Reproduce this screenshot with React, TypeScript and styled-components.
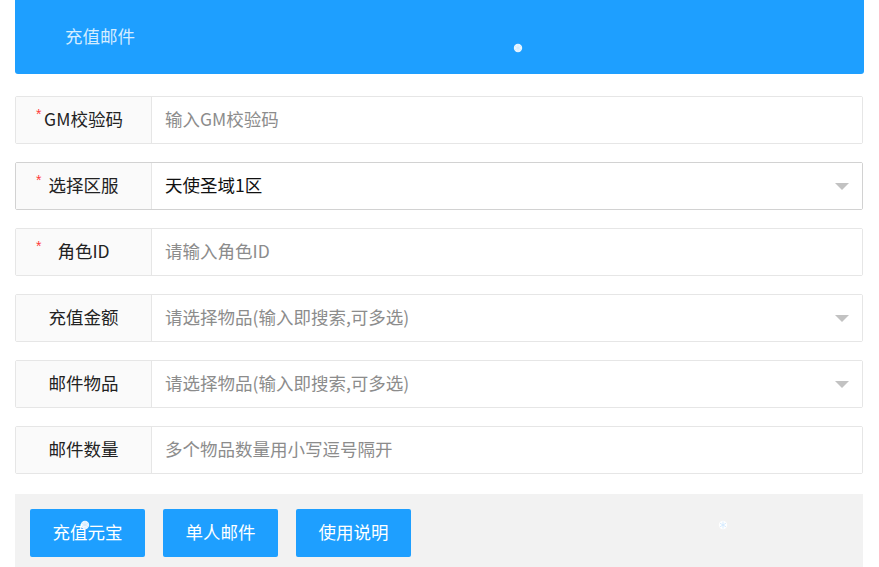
import React from "react";
import styled, { createGlobalStyle } from "styled-components";

const Global = createGlobalStyle`
  html, body { margin: 0; padding: 0; background: #fff; }
  body { font-family: "Noto Sans CJK SC", "Noto Sans", sans-serif; }
  * { box-sizing: border-box; }
`;

const Page = styled.div`
  position: relative;
  padding: 0 15px;
  height: 567px;
  overflow: hidden;
`;

const Header = styled.div`
  height: 74px;
  background: #1e9fff;
  border-radius: 0 0 3px 3px;
  display: flex;
  align-items: center;
  padding-left: 50px;
  padding-bottom: 4px;
  color: rgba(255, 255, 255, 0.82);
  font-size: 17.5px;
  margin-bottom: 22px;
`;

const Form = styled.div`
  display: flex;
  flex-direction: column;
  gap: 18px;
  margin-bottom: 20px;
`;

const Row = styled.div<{ $select?: boolean }>`
  position: relative;
  display: flex;
  height: 48px;
  border: 1px solid ${(p) => (p.$select ? "#d2d2d2" : "#e6e6e6")};
  border-radius: 2px;
  width: 848px;
`;

const Label = styled.div`
  position: relative;
  width: 136px;
  flex: none;
  background: #fafafa;
  border-right: 1px solid #e6e6e6;
  display: flex;
  align-items: center;
  justify-content: center;
  padding-bottom: 4px;
  font-size: 17.5px;
  color: #222;
`;

const Star = styled.span<{ $left: number }>`
  position: absolute;
  left: ${(p) => p.$left}px;
  top: 10px;
  color: #ff3b3b;
  font-size: 14px;
  line-height: 14px;
  font-family: "Liberation Sans", sans-serif;
`;

const Field = styled.div<{ $filled?: boolean }>`
  flex: 1;
  display: flex;
  align-items: center;
  padding-left: 13px;
  padding-bottom: 4px;
  font-size: 17.5px;
  color: ${(p) => (p.$filled ? "#111" : "#8c8c8c")};
  background: #fff;
`;

const Arrow = styled.span`
  position: absolute;
  right: 13px;
  top: 50%;
  margin-top: -3px;
  width: 0;
  height: 0;
  border-left: 7px solid transparent;
  border-right: 7px solid transparent;
  border-top: 7px solid #c2c2c2;
`;

const Bar = styled.div`
  background: #f2f2f2;
  padding: 15px;
  height: 90px;
  display: flex;
  gap: 18px;
  width: 848px;
`;

const Button = styled.button`
  width: 115px;
  height: 48px;
  background: #1e9fff;
  color: #fff;
  border: none;
  border-radius: 2px;
  font-family: inherit;
  font-size: 17.5px;
  padding: 0 0 4px;
`;

const FlakeWrap = styled.svg<{ $x: number; $y: number }>`
  position: absolute;
  left: ${(p) => p.$x}px;
  top: ${(p) => p.$y}px;
  width: 10px;
  height: 10px;
  pointer-events: none;
`;

function Flake({ x, y }: { x: number; y: number }) {
  return (
    <FlakeWrap $x={x} $y={y} viewBox="0 0 10 10">
      <circle cx="5" cy="5" r="4.2" fill="#fff" opacity="0.9" />
      <g stroke="#cfe9ff" strokeWidth="0.8">
        <line x1="5" y1="1.5" x2="5" y2="8.5" />
        <line x1="2" y1="3.2" x2="8" y2="6.8" />
        <line x1="2" y1="6.8" x2="8" y2="3.2" />
      </g>
    </FlakeWrap>
  );
}

type R = { label: string; star?: number; value: string; filled?: boolean; select?: boolean };

const rows: R[] = [
  { label: "GM校验码", star: 20, value: "输入GM校验码" },
  { label: "选择区服", star: 20, value: "天使圣域1区", filled: true, select: true },
  { label: "角色ID", star: 20, value: "请输入角色ID" },
  { label: "充值金额", value: "请选择物品(输入即搜索,可多选)", select: true },
  { label: "邮件物品", value: "请选择物品(输入即搜索,可多选)", select: true },
  { label: "邮件数量", value: "多个物品数量用小写逗号隔开" },
];

export default function App() {
  return (
    <Page>
      <Global />
      <Header>充值邮件</Header>
      <Form>
        {rows.map((r) => (
          <Row key={r.label} $select={r.filled}>
            <Label>
              {r.star !== undefined && <Star $left={r.star}>*</Star>}
              {r.label}
            </Label>
            <Field $filled={r.filled}>{r.value}</Field>
            {r.select && <Arrow />}
          </Row>
        ))}
      </Form>
      <Bar>
        <Button>充值元宝</Button>
        <Button>单人邮件</Button>
        <Button>使用说明</Button>
      </Bar>
      <Flake x={513} y={43} />
      <Flake x={718} y={520} />
      <Flake x={80} y={520} />
    </Page>
  );
}
